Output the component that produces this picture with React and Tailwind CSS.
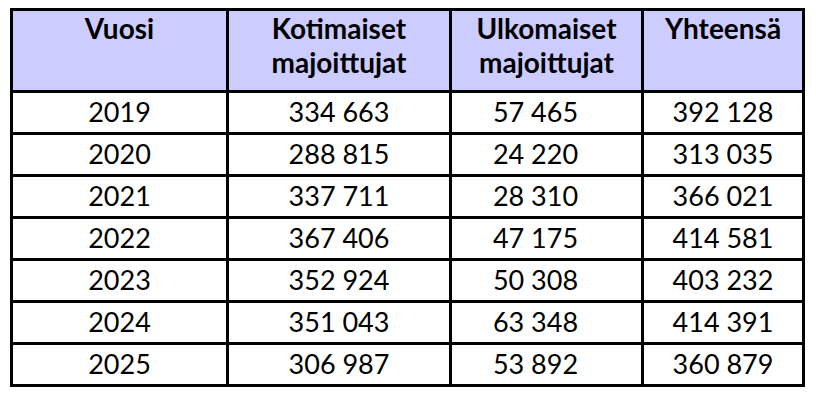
const HEADERS = [
  ["Vuosi"],
  ["Kotimaiset", "majoittujat"],
  ["Ulkomaiset", "majoittujat"],
  ["Yhteensä"],
];

const ROWS = [
  ["2019", "334 663", "57 465", "392 128"],
  ["2020", "288 815", "24 220", "313 035"],
  ["2021", "337 711", "28 310", "366 021"],
  ["2022", "367 406", "47 175", "414 581"],
  ["2023", "352 924", "50 308", "403 232"],
  ["2024", "351 043", "63 348", "414 391"],
  ["2025", "306 987", "53 892", "360 879"],
];

const cellPad = ["", "", "pr-[22px]", ""];

const App = () => {
  return (
    <div className="w-[816px] h-[404px] bg-white pl-[10px] pt-[8px] font-['Lato',sans-serif] text-black">
      <div className="w-[795px] bg-black p-[3px] grid grid-cols-[213px_220px_189px_158px] gap-[3px]">
        {HEADERS.map((lines, i) => (
          <div key={i} className="bg-[#ccccff] h-[79px] text-center font-bold text-[28px] leading-[34px]">
            {lines.map((l) => (
              <div key={l}>{l}</div>
            ))}
          </div>
        ))}
        {ROWS.map((row) =>
          row.map((v, j) => (
            <div
              key={row[0] + j}
              className={`bg-white h-[39px] flex items-center justify-center text-[27px] ${cellPad[j]}`}
            >
              {v}
            </div>
          ))
        )}
      </div>
    </div>
  );
};

export default App;
